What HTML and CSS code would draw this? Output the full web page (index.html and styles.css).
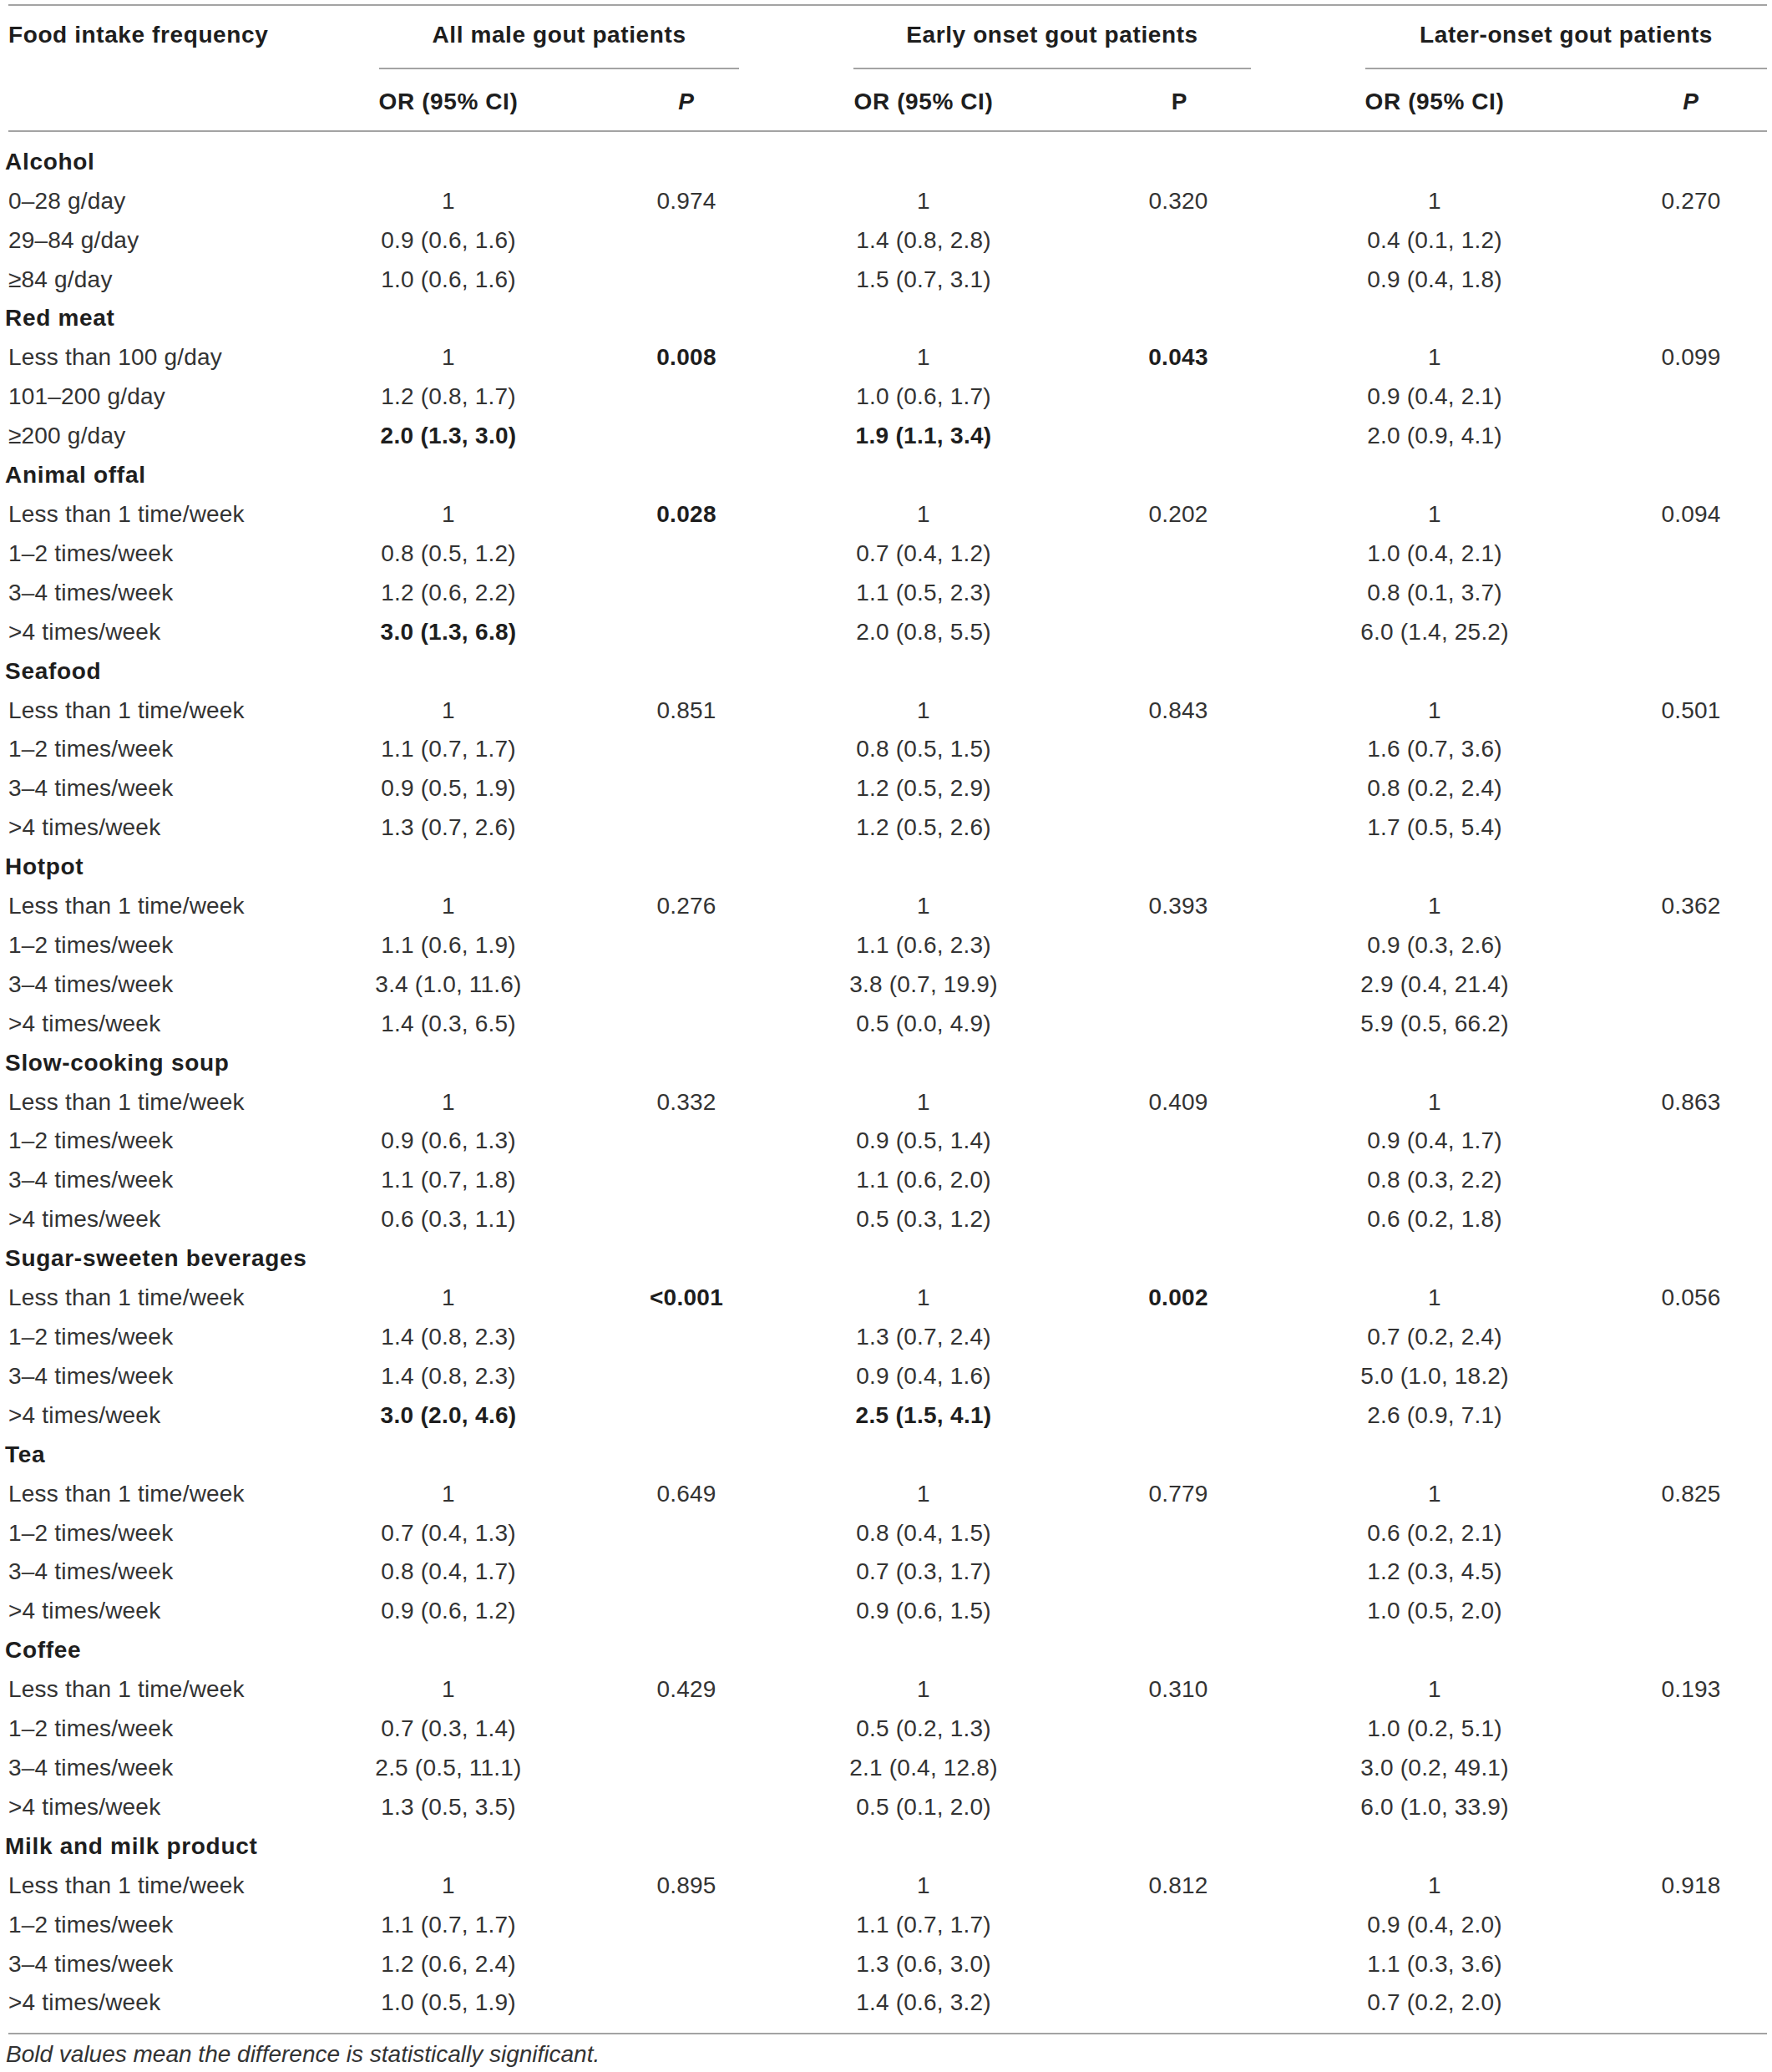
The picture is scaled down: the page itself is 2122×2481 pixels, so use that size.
FILE: index.html
```html
<!DOCTYPE html>
<html lang="en">
<head>
<meta charset="utf-8">
<title>Food intake frequency and gout</title>
<link rel="stylesheet" href="styles.css">
</head>
<body>
<div class="wrap">
<table class="t">
<colgroup>
<col class="c-label"><col class="c-or1"><col class="c-p1"><col class="c-or2"><col class="c-p2"><col class="c-or3"><col class="c-p3">
</colgroup>
<thead>
<tr class="h1">
<th class="lbl-h">Food intake frequency</th>
<th colspan="2" class="grp"><div class="grp-in g1">All male gout patients</div></th>
<th colspan="2" class="grp"><div class="grp-in g2">Early onset gout patients</div></th>
<th colspan="2" class="grp"><div class="grp-in g3">Later-onset gout patients</div></th>
</tr>
<tr class="h2">
<th></th>
<th>OR (95% CI)</th><th><i>P</i></th>
<th>OR (95% CI)</th><th class="p-up">P</th>
<th>OR (95% CI)</th><th><i>P</i></th>
</tr>
</thead>
<tbody>
<tr class="first"><td class="cat" colspan="7">Alcohol</td></tr>
<tr><td>0–28 g/day</td><td>1</td><td>0.974</td><td>1</td><td>0.320</td><td>1</td><td>0.270</td></tr>
<tr><td>29–84 g/day</td><td>0.9 (0.6, 1.6)</td><td></td><td>1.4 (0.8, 2.8)</td><td></td><td>0.4 (0.1, 1.2)</td><td></td></tr>
<tr><td>≥84 g/day</td><td>1.0 (0.6, 1.6)</td><td></td><td>1.5 (0.7, 3.1)</td><td></td><td>0.9 (0.4, 1.8)</td><td></td></tr>

<tr><td class="cat" colspan="7">Red meat</td></tr>
<tr><td>Less than 100 g/day</td><td>1</td><td class="b">0.008</td><td>1</td><td class="b">0.043</td><td>1</td><td>0.099</td></tr>
<tr><td>101–200 g/day</td><td>1.2 (0.8, 1.7)</td><td></td><td>1.0 (0.6, 1.7)</td><td></td><td>0.9 (0.4, 2.1)</td><td></td></tr>
<tr><td>≥200 g/day</td><td class="b">2.0 (1.3, 3.0)</td><td></td><td class="b">1.9 (1.1, 3.4)</td><td></td><td>2.0 (0.9, 4.1)</td><td></td></tr>

<tr><td class="cat" colspan="7">Animal offal</td></tr>
<tr><td>Less than 1 time/week</td><td>1</td><td class="b">0.028</td><td>1</td><td>0.202</td><td>1</td><td>0.094</td></tr>
<tr><td>1–2 times/week</td><td>0.8 (0.5, 1.2)</td><td></td><td>0.7 (0.4, 1.2)</td><td></td><td>1.0 (0.4, 2.1)</td><td></td></tr>
<tr><td>3–4 times/week</td><td>1.2 (0.6, 2.2)</td><td></td><td>1.1 (0.5, 2.3)</td><td></td><td>0.8 (0.1, 3.7)</td><td></td></tr>
<tr><td>&gt;4 times/week</td><td class="b">3.0 (1.3, 6.8)</td><td></td><td>2.0 (0.8, 5.5)</td><td></td><td>6.0 (1.4, 25.2)</td><td></td></tr>

<tr><td class="cat" colspan="7">Seafood</td></tr>
<tr><td>Less than 1 time/week</td><td>1</td><td>0.851</td><td>1</td><td>0.843</td><td>1</td><td>0.501</td></tr>
<tr><td>1–2 times/week</td><td>1.1 (0.7, 1.7)</td><td></td><td>0.8 (0.5, 1.5)</td><td></td><td>1.6 (0.7, 3.6)</td><td></td></tr>
<tr><td>3–4 times/week</td><td>0.9 (0.5, 1.9)</td><td></td><td>1.2 (0.5, 2.9)</td><td></td><td>0.8 (0.2, 2.4)</td><td></td></tr>
<tr><td>&gt;4 times/week</td><td>1.3 (0.7, 2.6)</td><td></td><td>1.2 (0.5, 2.6)</td><td></td><td>1.7 (0.5, 5.4)</td><td></td></tr>

<tr><td class="cat" colspan="7">Hotpot</td></tr>
<tr><td>Less than 1 time/week</td><td>1</td><td>0.276</td><td>1</td><td>0.393</td><td>1</td><td>0.362</td></tr>
<tr><td>1–2 times/week</td><td>1.1 (0.6, 1.9)</td><td></td><td>1.1 (0.6, 2.3)</td><td></td><td>0.9 (0.3, 2.6)</td><td></td></tr>
<tr><td>3–4 times/week</td><td>3.4 (1.0, 11.6)</td><td></td><td>3.8 (0.7, 19.9)</td><td></td><td>2.9 (0.4, 21.4)</td><td></td></tr>
<tr><td>&gt;4 times/week</td><td>1.4 (0.3, 6.5)</td><td></td><td>0.5 (0.0, 4.9)</td><td></td><td>5.9 (0.5, 66.2)</td><td></td></tr>

<tr><td class="cat" colspan="7">Slow-cooking soup</td></tr>
<tr><td>Less than 1 time/week</td><td>1</td><td>0.332</td><td>1</td><td>0.409</td><td>1</td><td>0.863</td></tr>
<tr><td>1–2 times/week</td><td>0.9 (0.6, 1.3)</td><td></td><td>0.9 (0.5, 1.4)</td><td></td><td>0.9 (0.4, 1.7)</td><td></td></tr>
<tr><td>3–4 times/week</td><td>1.1 (0.7, 1.8)</td><td></td><td>1.1 (0.6, 2.0)</td><td></td><td>0.8 (0.3, 2.2)</td><td></td></tr>
<tr><td>&gt;4 times/week</td><td>0.6 (0.3, 1.1)</td><td></td><td>0.5 (0.3, 1.2)</td><td></td><td>0.6 (0.2, 1.8)</td><td></td></tr>

<tr><td class="cat" colspan="7">Sugar-sweeten beverages</td></tr>
<tr><td>Less than 1 time/week</td><td>1</td><td class="b">&lt;0.001</td><td>1</td><td class="b">0.002</td><td>1</td><td>0.056</td></tr>
<tr><td>1–2 times/week</td><td>1.4 (0.8, 2.3)</td><td></td><td>1.3 (0.7, 2.4)</td><td></td><td>0.7 (0.2, 2.4)</td><td></td></tr>
<tr><td>3–4 times/week</td><td>1.4 (0.8, 2.3)</td><td></td><td>0.9 (0.4, 1.6)</td><td></td><td>5.0 (1.0, 18.2)</td><td></td></tr>
<tr><td>&gt;4 times/week</td><td class="b">3.0 (2.0, 4.6)</td><td></td><td class="b">2.5 (1.5, 4.1)</td><td></td><td>2.6 (0.9, 7.1)</td><td></td></tr>

<tr><td class="cat" colspan="7">Tea</td></tr>
<tr><td>Less than 1 time/week</td><td>1</td><td>0.649</td><td>1</td><td>0.779</td><td>1</td><td>0.825</td></tr>
<tr><td>1–2 times/week</td><td>0.7 (0.4, 1.3)</td><td></td><td>0.8 (0.4, 1.5)</td><td></td><td>0.6 (0.2, 2.1)</td><td></td></tr>
<tr><td>3–4 times/week</td><td>0.8 (0.4, 1.7)</td><td></td><td>0.7 (0.3, 1.7)</td><td></td><td>1.2 (0.3, 4.5)</td><td></td></tr>
<tr><td>&gt;4 times/week</td><td>0.9 (0.6, 1.2)</td><td></td><td>0.9 (0.6, 1.5)</td><td></td><td>1.0 (0.5, 2.0)</td><td></td></tr>

<tr><td class="cat" colspan="7">Coffee</td></tr>
<tr><td>Less than 1 time/week</td><td>1</td><td>0.429</td><td>1</td><td>0.310</td><td>1</td><td>0.193</td></tr>
<tr><td>1–2 times/week</td><td>0.7 (0.3, 1.4)</td><td></td><td>0.5 (0.2, 1.3)</td><td></td><td>1.0 (0.2, 5.1)</td><td></td></tr>
<tr><td>3–4 times/week</td><td>2.5 (0.5, 11.1)</td><td></td><td>2.1 (0.4, 12.8)</td><td></td><td>3.0 (0.2, 49.1)</td><td></td></tr>
<tr><td>&gt;4 times/week</td><td>1.3 (0.5, 3.5)</td><td></td><td>0.5 (0.1, 2.0)</td><td></td><td>6.0 (1.0, 33.9)</td><td></td></tr>

<tr><td class="cat" colspan="7">Milk and milk product</td></tr>
<tr><td>Less than 1 time/week</td><td>1</td><td>0.895</td><td>1</td><td>0.812</td><td>1</td><td>0.918</td></tr>
<tr><td>1–2 times/week</td><td>1.1 (0.7, 1.7)</td><td></td><td>1.1 (0.7, 1.7)</td><td></td><td>0.9 (0.4, 2.0)</td><td></td></tr>
<tr><td>3–4 times/week</td><td>1.2 (0.6, 2.4)</td><td></td><td>1.3 (0.6, 3.0)</td><td></td><td>1.1 (0.3, 3.6)</td><td></td></tr>
<tr class="last"><td>&gt;4 times/week</td><td>1.0 (0.5, 1.9)</td><td></td><td>1.4 (0.6, 3.2)</td><td></td><td>0.7 (0.2, 2.0)</td><td></td></tr>
</tbody>
</table>
<p class="note">Bold values mean the difference is statistically significant.</p>
</div>
</body>
</html>
```

FILE: styles.css
```css
html, body {
  margin: 0;
  padding: 0;
  background: #ffffff;
}

body {
  font-family: "Liberation Sans", Arial, Helvetica, sans-serif;
  color: #333333;
}

.wrap {
  padding: 5px 6px 0 10px;
}

.t {
  width: 2106px;
  table-layout: fixed;
  border-collapse: collapse;
  border-spacing: 0;
  font-size: 28px;
  letter-spacing: 0.2px;
}

.c-label { width: 312px; }
.c-or1 { width: 430px; }
.c-p1 { width: 140px; }
.c-or2 { width: 428px; }
.c-p2 { width: 182px; }
.c-or3 { width: 432px; }
.c-p3 { width: 182px; }

.t th,
.t td {
  padding: 0;
  line-height: 46.9px;
  text-align: center;
  white-space: nowrap;
  vertical-align: top;
}

.t th {
  font-weight: bold;
  color: #1e1e1e;
  letter-spacing: 0.6px;
}

.t th.p-up {
  padding-left: 3px;
}

.t thead tr.h1 th {
  border-top: 2px solid #a3a3a3;
  padding-top: 12px;
}

.t thead tr.h1 th.lbl-h {
  text-align: left;
  padding-left: 0;
}

.grp-in {
  padding-bottom: 15px;
  border-bottom: 2px solid #a3a3a3;
}

.g1 { margin-left: 132px; margin-right: 7px; }
.g2 { margin-left: 130px; margin-right: 4px; }
.g3 { margin-left: 133px; margin-right: 0; }

.t thead tr.h2 th {
  padding-top: 16px;
  padding-bottom: 10px;
  border-bottom: 2px solid #a3a3a3;
}

.t td:first-child {
  text-align: left;
}

.t td.cat {
  font-weight: bold;
  color: #1e1e1e;
  text-indent: -4px;
  letter-spacing: 0.7px;
}

.t td.b {
  font-weight: bold;
  color: #1e1e1e;
  letter-spacing: 0.3px;
}

.t tr.first td {
  padding-top: 13px;
}

.t tr.last td {
  padding-bottom: 12px;
  border-bottom: 2px solid #a3a3a3;
}

.note {
  margin: 6px 0 0 -3px;
  font-size: 28px;
  font-style: italic;
  line-height: 36px;
  color: #333333;
}
```
